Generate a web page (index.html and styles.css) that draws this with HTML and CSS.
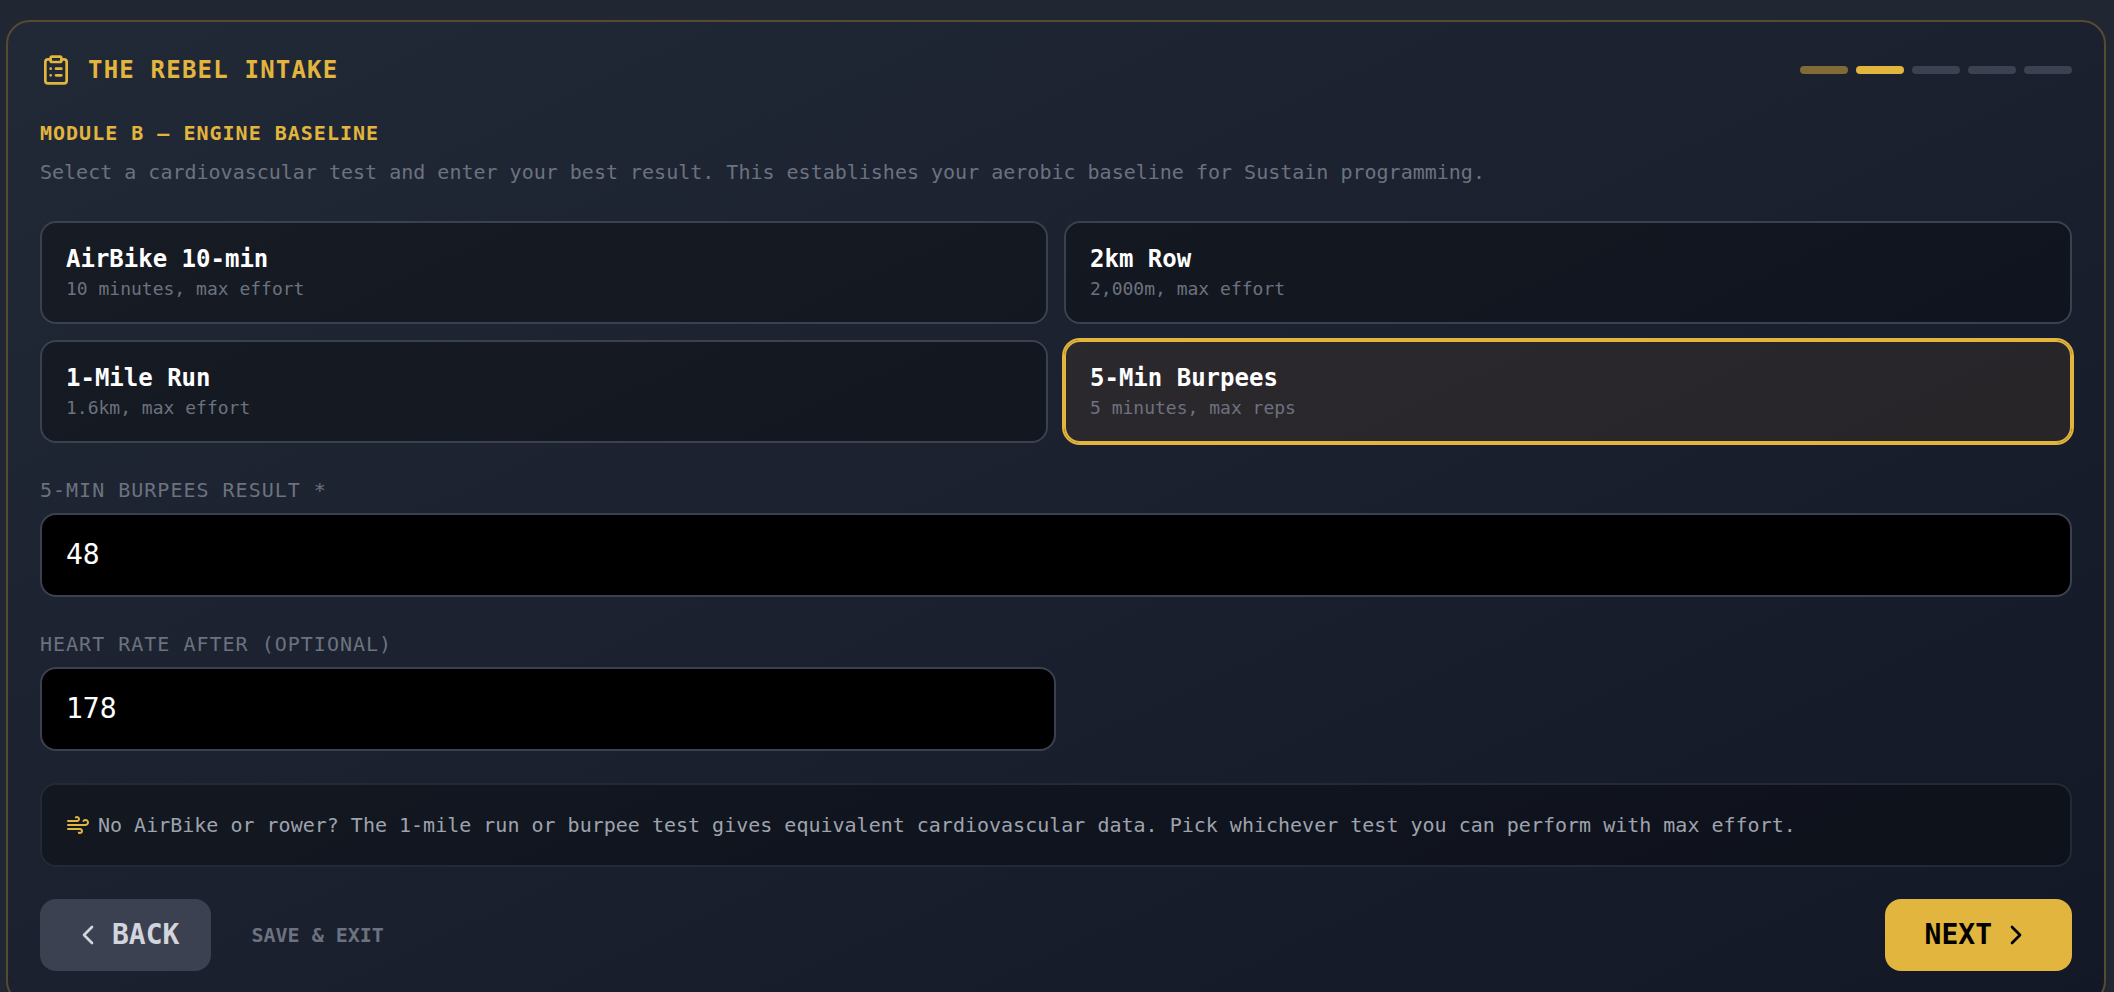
FILE: index.html
```html
<!DOCTYPE html>
<html lang="en">
<head>
    <meta charset="UTF-8">
    <meta name="viewport" content="width=device-width, initial-scale=1.0">
    <title>The Rebel Intake</title>
    <link rel="stylesheet" href="styles.css">
</head>
<body>
    <main class="intake-card">
        <header class="intake-header">
            <svg class="icon icon-lg" viewBox="0 0 24 24" aria-hidden="true">
                <rect x="8" y="2" width="8" height="4" rx="1" ry="1"/>
                <path d="M16 4h2a2 2 0 0 1 2 2v14a2 2 0 0 1-2 2H6a2 2 0 0 1-2-2V6a2 2 0 0 1 2-2h2"/>
                <path d="M12 11h4M12 16h4M8 11h.01M8 16h.01"/>
            </svg>
            <h1 class="intake-title">THE REBEL INTAKE</h1>
            <div class="progress">
                <span class="step step-done"></span>
                <span class="step step-active"></span>
                <span class="step"></span>
                <span class="step"></span>
                <span class="step"></span>
            </div>
        </header>

        <form class="module">
            <div class="module-intro">
                <h2 class="module-title">MODULE B — ENGINE BASELINE</h2>
                <p class="module-text">Select a cardiovascular test and enter your best result. This establishes your aerobic baseline for Sustain programming.</p>
            </div>

            <div class="test-grid">
                <button type="button" class="test">
                    <span class="test-name">AirBike 10-min</span>
                    <span class="test-desc">10 minutes, max effort</span>
                </button>
                <button type="button" class="test">
                    <span class="test-name">2km Row</span>
                    <span class="test-desc">2,000m, max effort</span>
                </button>
                <button type="button" class="test">
                    <span class="test-name">1-Mile Run</span>
                    <span class="test-desc">1.6km, max effort</span>
                </button>
                <button type="button" class="test test-selected">
                    <span class="test-name">5-Min Burpees</span>
                    <span class="test-desc">5 minutes, max reps</span>
                </button>
            </div>

            <div class="field">
                <label for="result">5-MIN BURPEES RESULT *</label>
                <input type="text" id="result" inputmode="numeric" value="48" required>
            </div>

            <div class="field field-half">
                <label for="heartRate">HEART RATE AFTER (OPTIONAL)</label>
                <input type="text" id="heartRate" inputmode="numeric" value="178">
            </div>

            <div class="note">
                <svg class="icon icon-sm" viewBox="0 0 24 24" aria-hidden="true">
                    <path d="M12.8 19.6A2 2 0 1 0 14 16H2"/>
                    <path d="M17.5 8a2.5 2.5 0 1 1 2 4H2"/>
                    <path d="M9.8 4.4A2 2 0 1 1 11 8H2"/>
                </svg>
                <p>No AirBike or rower? The 1-mile run or burpee test gives equivalent cardiovascular data. Pick whichever test you can perform with max effort.</p>
            </div>

            <div class="actions">
                <button type="button" class="btn btn-back">
                    <svg class="icon icon-lg" viewBox="0 0 24 24" aria-hidden="true"><path d="m15 18-6-6 6-6"/></svg>
                    BACK
                </button>
                <button type="button" class="btn-exit">SAVE &amp; EXIT</button>
                <button type="submit" class="btn btn-next">
                    NEXT
                    <svg class="icon icon-lg" viewBox="0 0 24 24" aria-hidden="true"><path d="m9 18 6-6-6-6"/></svg>
                </button>
            </div>
        </form>
    </main>
</body>
</html>
```
FILE: styles.css
```css
* {
    margin: 0;
    padding: 0;
    box-sizing: border-box;
}

body {
    background-color: #202733;
    color: #fff;
    font-family: Menlo, "DejaVu Sans Mono", monospace;
    font-size: 20px;
    line-height: 30px;
    padding: 20px 8px 20px 6px;
    min-height: 100vh;
    overflow-x: hidden;
}

button,
input {
    font: inherit;
    color: inherit;
}

button {
    border: none;
    background: none;
    cursor: pointer;
}

.intake-card {
    background: linear-gradient(to bottom right, #222936, #131826);
    border: 2px solid #564a30;
    border-radius: 24px;
    padding: 32px;
}

.intake-header {
    display: flex;
    align-items: center;
    gap: 16px;
    margin-bottom: 32px;
}

.intake-title {
    color: #e1b53e;
    font-size: 24px;
    line-height: 32px;
    letter-spacing: 0.05em;
}

.icon {
    flex-shrink: 0;
    fill: none;
    stroke: currentColor;
    stroke-width: 2;
    stroke-linecap: round;
    stroke-linejoin: round;
}

.icon-lg {
    width: 32px;
    height: 32px;
}

.icon-sm {
    width: 24px;
    height: 24px;
}

.intake-header .icon,
.note .icon {
    color: #e1b53e;
}

/* progress steps */
.progress {
    display: flex;
    gap: 8px;
    margin-left: auto;
}

.step {
    width: 48px;
    height: 8px;
    border-radius: 4px;
    background-color: #3b4150;
}

.step-done { background-color: #806a35; }
.step-active { background-color: #e1b53e; }

.module {
    display: flex;
    flex-direction: column;
    gap: 32px;
}

.module-title {
    color: #e1b53e;
    font-size: 20px;
    letter-spacing: 0.05em;
    margin-bottom: 8px;
}

.module-text {
    color: #6c727f;
    line-height: 33px;
}

/* test picker */
.test-grid {
    display: grid;
    grid-template-columns: 1fr 1fr;
    gap: 16px;
}

.test {
    display: flex;
    flex-direction: column;
    padding: 20px 24px;
    text-align: left;
    background-color: rgba(0, 0, 0, 0.3);
    border: 2px solid #3b4150;
    border-radius: 16px;
}

.test-name {
    font-size: 24px;
    font-weight: bold;
    line-height: 32px;
}

.test-desc {
    color: #6c727f;
    font-size: 18px;
    line-height: 27px;
}

.test-selected {
    background-color: rgba(190, 112, 25, 0.1);
    border-color: #e1b53e;
    box-shadow: 0 0 0 2px #e1b53e;
}

/* inputs */
.field {
    display: flex;
    flex-direction: column;
    gap: 8px;
}

.field-half {
    width: 50%;
}

.field label {
    color: #6c727f;
    letter-spacing: 0.05em;
}

.field input {
    width: 100%;
    padding: 20px 24px;
    font-size: 28px;
    line-height: 40px;
    background-color: #000;
    border: 2px solid #3b4150;
    border-radius: 16px;
    outline: none;
}

.field input:focus {
    border-color: #e1b53e;
}

.note {
    display: flex;
    align-items: center;
    gap: 8px;
    padding: 24px;
    color: #9ea3ae;
    line-height: 32px;
    background-color: rgba(0, 0, 0, 0.3);
    border: 2px solid #232a36;
    border-radius: 16px;
}

/* footer buttons */
.actions {
    display: flex;
    align-items: center;
    gap: 16px;
}

.btn {
    display: flex;
    align-items: center;
    gap: 8px;
    padding: 16px 32px;
    font-size: 28px;
    font-weight: bold;
    line-height: 40px;
    border-radius: 16px;
}

.btn-back {
    color: #d2d5db;
    background-color: #3b4150;
}

.btn-next {
    margin-left: auto;
    padding: 16px 40px;
    color: #000;
    background-color: #e1b53e;
}

.btn-exit {
    padding: 16px 24px;
    color: #6c727f;
    font-weight: bold;
}

.btn:hover {
    opacity: 0.9;
}
```
